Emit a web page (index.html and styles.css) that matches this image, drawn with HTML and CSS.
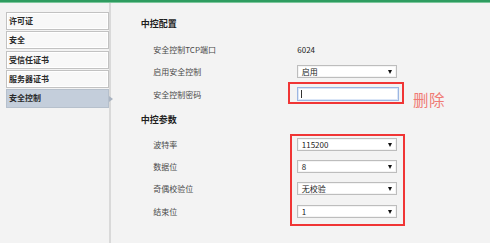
FILE: index.html
```html
<!DOCTYPE html>
<html lang="zh-CN">
<head>
<meta charset="utf-8">
<title>安全控制</title>
<link rel="stylesheet" href="styles.css">
</head>
<body>
<div class="topbar"></div>
<div class="main">
  <nav class="sidebar">
    <div class="menu-item">许可证</div>
    <div class="menu-item">安全</div>
    <div class="menu-item">受信任证书</div>
    <div class="menu-item">服务器证书</div>
    <div class="menu-item active">安全控制</div>
  </nav>
  <section class="content">
    <h2 class="section-title">中控配置</h2>
    <div class="row">
      <div class="label">安全控制TCP端口</div>
      <div class="value">6024</div>
    </div>
    <div class="row">
      <div class="label">启用安全控制</div>
      <div class="select"><span>启用</span></div>
    </div>
    <div class="row">
      <div class="label">安全控制密码</div>
      <div class="input"><span class="caret"></span></div>
    </div>
    <h2 class="section-title second">中控参数</h2>
    <div class="row">
      <div class="label">波特率</div>
      <div class="select"><span>115200</span></div>
    </div>
    <div class="row">
      <div class="label">数据位</div>
      <div class="select"><span>8</span></div>
    </div>
    <div class="row">
      <div class="label">奇偶校验位</div>
      <div class="select"><span>无校验</span></div>
    </div>
    <div class="row">
      <div class="label">结束位</div>
      <div class="select"><span>1</span></div>
    </div>
  </section>
  <div class="mark mark-password"></div>
  <div class="mark-note">删除</div>
  <div class="mark mark-params"></div>
</div>
</body>
</html>
```

FILE: styles.css
```css
* { box-sizing: border-box; }
html, body {
  margin: 0;
  padding: 0;
  height: 100%;
}
body {
  background: #f3f3f3;
  font-family: "Noto Sans CJK SC", "Noto Sans", "DejaVu Sans", sans-serif;
  color: #333;
  overflow: hidden;
}
.topbar {
  height: 3px;
  background: #2e9c60;
  border-bottom: 1px solid #7cc79c;
}
.main {
  position: relative;
  display: flex;
  height: 240px;
}
.sidebar {
  width: 111px;
  flex: none;
  padding: 9px 0 0 6px;
  border-right: 2px solid #d9d9d9;
}
.menu-item {
  position: relative;
  height: 18px;
  margin-bottom: 1.25px;
  padding-left: 2px;
  border: 1px solid #c2c2c2;
  box-shadow: inset 0 0 0 1px #ffffff;
  background: #f8f8f8;
  font-size: 8px;
  font-weight: 700;
  line-height: 16px;
  color: #2a2a2a;
  white-space: nowrap;
}
.menu-item.active {
  height: 18.7px;
  background: #c4cedb;
  border-color: #b6c0cc;
  box-shadow: none;
  line-height: 16.7px;
}
.menu-item.active::after {
  content: "";
  position: absolute;
  right: -5px;
  top: 6px;
  border-left: 4px solid #aab4c2;
  border-top: 3px solid transparent;
  border-bottom: 3px solid transparent;
}
.content {
  flex: 1;
  padding: 14px 0 0 29.7px;
}
.section-title {
  margin: 0 0 7.6px 0;
  height: 14px;
  font-size: 9px;
  font-weight: 700;
  line-height: 14px;
  color: #1e1e1e;
}
.section-title.second {
  margin-top: 7.4px;
  margin-bottom: 6.9px;
}
.row {
  display: flex;
  align-items: center;
  height: 22.2px;
  padding-left: 12.6px;
}
.label {
  width: 144px;
  flex: none;
  font-size: 8px;
  color: #4a4a4a;
  white-space: nowrap;
}
.value {
  font-size: 8px;
  color: #222;
}
.select {
  position: relative;
  width: 100px;
  height: 13px;
  background: #ffffff;
  border: 1px solid #bdbdbd;
  box-shadow: inset 0 0 0 1px #f4f4f4;
  font-size: 8px;
  line-height: 11px;
  padding-left: 3.5px;
  color: #222;
}
.select::after {
  content: "";
  position: absolute;
  right: 4px;
  top: 4px;
  border-top: 4px solid #111;
  border-left: 2.5px solid transparent;
  border-right: 2.5px solid transparent;
}
.input {
  position: relative;
  width: 102px;
  height: 14px;
  background: #ffffff;
  border: 1px solid #9cb6e2;
  box-shadow: inset 0 0 0 1px #dbe6f7;
}
.caret {
  position: absolute;
  left: 3px;
  top: 2px;
  width: 1px;
  height: 8px;
  background: #333;
}
.mark {
  position: absolute;
  border: 2px solid #f03535;
}
.mark-password {
  left: 288px;
  top: 79px;
  width: 116px;
  height: 22px;
}
.mark-params {
  left: 290px;
  top: 131px;
  width: 115px;
  height: 92px;
}
.mark-note {
  position: absolute;
  left: 413px;
  top: 86px;
  font-size: 15.5px;
  line-height: 20px;
  color: #f07a74;
  letter-spacing: 0.5px;
}
```
